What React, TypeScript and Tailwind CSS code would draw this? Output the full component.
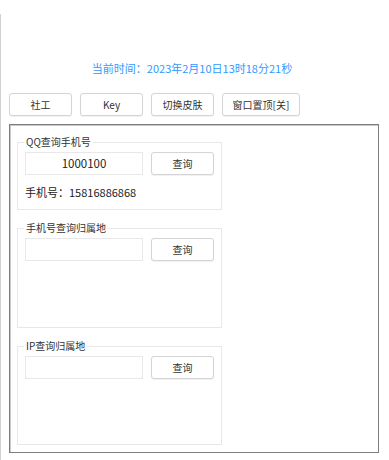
import React from 'react';

function Btn({ label, wide }: { label: string; wide?: boolean }) {
  return (
    <button
      className={
        'h-[23px] rounded-[3px] border border-[#d4d4d4] bg-white text-[10px] text-[#333] shadow-[0_1px_1px_rgba(0,0,0,0.06)] ' +
        (wide ? 'w-[78px]' : 'w-[63px]')
      }
    >
      {label}
    </button>
  );
}

function Group({
  title,
  height,
  value,
  children,
}: {
  title: string;
  height: string;
  value?: string;
  children?: React.ReactNode;
}) {
  return (
    <div className={'relative ml-[7px] w-[205px] border border-[#e8e8e8] ' + height}>
      <span className="absolute -top-[8px] left-[6px] bg-white px-[2px] text-[10px] leading-[14px] text-[#333]">
        {title}
      </span>
      <div className="flex gap-[8px] pl-[7px] pt-[9px]">
        <div className="flex h-[23px] w-[118px] items-center justify-center border border-[#e8e8e8] text-[11.5px] text-[#222]">
          {value}
        </div>
        <Btn label="查询" />
      </div>
      {children}
    </div>
  );
}

export default function App() {
  return (
    <div className="h-[460px] w-[389px] overflow-hidden bg-white font-['Noto_Sans_CJK_SC','Noto_Sans',sans-serif]">
      <div className="mt-[14px] h-[446px] border-l border-[#d2d2d2]">
        <div className="pr-[6px] pt-[46px] text-center text-[11px] leading-[16px] text-[#3399ff]">
          当前时间：2023年2月10日13时18分21秒
        </div>

        <div className="ml-[8px] mt-[17px] flex gap-[8px]">
          <Btn label="社工" />
          <Btn label="Key" />
          <Btn label="切换皮肤" />
          <Btn label="窗口置顶[关]" wide />
        </div>

        <div className="ml-[8px] mt-[8px] flex h-[329px] w-[370px] flex-col gap-[18px] border border-[#7e7e7e] pt-[17px] shadow-[inset_1px_1px_0_#c8c8c8]">
          <Group title="QQ查询手机号" height="h-[68px]" value="1000100">
            <div className="pl-[7px] pt-[9px] text-[11px] leading-[16px] text-[#222]">
              手机号：15816886868
            </div>
          </Group>
          <Group title="手机号查询归属地" height="h-[100px]" />
          <Group title="IP查询归属地" height="h-[99px]" />
        </div>
      </div>
    </div>
  );
}
